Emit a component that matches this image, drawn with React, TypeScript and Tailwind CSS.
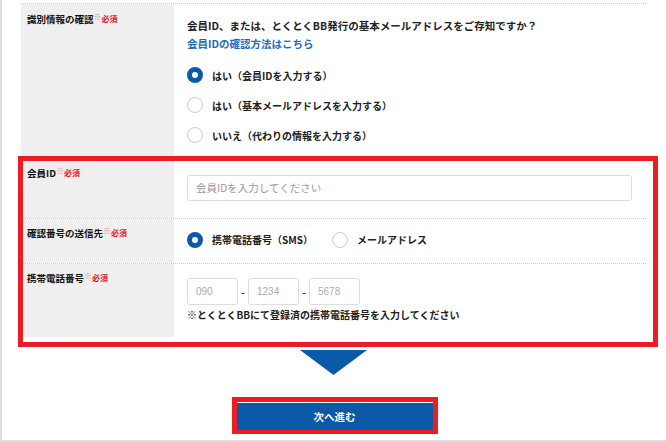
import React from 'react';

const FONT = { fontFamily: '"Noto Sans CJK JP", "Noto Sans", sans-serif' };

function Required() {
  return (
    <span className="flex items-start">
      <span className="text-[8px] leading-[8px] text-[#f27f84]">※</span>
      <span className="text-[8px] leading-[12px] font-bold text-[#e8131b]">必須</span>
    </span>
  );
}

function Radio({ checked, label }: { checked?: boolean; label: string }) {
  return (
    <label className="flex items-center gap-[9px]">
      <span
        className={
          checked
            ? 'w-4 h-4 rounded-full border-[5px] border-[#0a5aa8] bg-white'
            : 'w-4 h-4 rounded-full border border-[#cccccc] bg-white'
        }
      />
      <span className="text-[10px] font-bold text-[#222]">{label}</span>
    </label>
  );
}

function Label({ text, pt }: { text: string; pt: string }) {
  return (
    <div className={`w-[153px] shrink-0 bg-[#efefef] pl-[6px] ${pt}`}>
      <div className="flex items-start">
        <span className="text-[9.5px] leading-[12px] font-bold text-[#111]">{text}</span>
        <Required />
      </div>
    </div>
  );
}

export default function App() {
  return (
    <div
      style={FONT}
      className="w-[666px] h-[442px] bg-white border-l-2 border-b-2 border-[#dddddd] flex flex-col pl-[19px] pr-[20px]"
    >
      <div className="mt-[3px] border-t border-dotted border-[#cccccc]">
        {/* 識別情報 */}
        <div className="flex border-b border-dotted border-[#cccccc]">
          <Label text="識別情報の確認" pt="pt-[9px]" />
          <div className="flex-1 pl-[13px] pt-[14px] pb-[7px]">
            <p className="text-[10.5px] leading-[16px] font-bold text-[#222]">
              会員ID、または、とくとくBB発行の基本メールアドレスをご存知ですか？
            </p>
            <a className="block mt-[2px] text-[10.5px] leading-[16px] font-bold text-[#1a6dbb]">
              会員IDの確認方法はこちら
            </a>
            <div className="mt-[8px] flex flex-col">
              <div className="h-[30px] flex items-center">
                <Radio checked label="はい（会員IDを入力する）" />
              </div>
              <div className="h-[30px] flex items-center">
                <Radio label="はい（基本メールアドレスを入力する）" />
              </div>
              <div className="h-[30px] flex items-center">
                <Radio label="いいえ（代わりの情報を入力する）" />
              </div>
            </div>
          </div>
        </div>

        <div className="relative">
          {/* 会員ID */}
          <div className="flex border-b border-dotted border-[#cccccc]">
            <Label text="会員ID" pt="pt-[9px]" />
            <div className="flex-1 pl-[13px] pr-[14px] pt-[15px] pb-[17px]">
              <input
                placeholder="会員IDを入力してください"
                className="w-full h-[26px] rounded-[3px] border border-[#dddddd] px-[8px] text-[10.5px] placeholder:text-[#999]"
                style={FONT}
              />
            </div>
          </div>

          {/* 送信先 */}
          <div className="flex border-b border-dotted border-[#cccccc]">
            <Label text="確認番号の送信先" pt="pt-[8px]" />
            <div className="flex-1 pl-[13px] pt-[6px] pb-[8px] h-[44px]">
              <div className="h-[30px] flex items-center gap-[19px]">
                <Radio checked label="携帯電話番号（SMS）" />
                <Radio label="メールアドレス" />
              </div>
            </div>
          </div>

          {/* 携帯電話番号 */}
          <div className="flex">
            <Label text="携帯電話番号" pt="pt-[8px]" />
            <div className="flex-1 pl-[13px] pt-[14px] pb-[14px]">
              <div className="flex items-center gap-[3px]">
                <input
                  placeholder="090"
                  className="w-[51px] h-[27px] rounded-[3px] border border-[#dddddd] px-[8px] text-[10px] placeholder:text-[#aaa]"
                  style={{ fontFamily: '"Liberation Sans", sans-serif' }}
                />
                <span className="w-[4px] text-[10px] font-bold text-[#333] text-center">-</span>
                <input
                  placeholder="1234"
                  className="w-[51px] h-[27px] rounded-[3px] border border-[#dddddd] px-[8px] text-[10px] placeholder:text-[#aaa]"
                  style={{ fontFamily: '"Liberation Sans", sans-serif' }}
                />
                <span className="w-[4px] text-[10px] font-bold text-[#333] text-center">-</span>
                <input
                  placeholder="5678"
                  className="w-[51px] h-[27px] rounded-[3px] border border-[#dddddd] px-[8px] text-[10px] placeholder:text-[#aaa]"
                  style={{ fontFamily: '"Liberation Sans", sans-serif' }}
                />
              </div>
              <p className="mt-[2px] text-[10px] leading-[16px] font-bold text-[#222]">
                ※とくとくBBにて登録済の携帯電話番号を入力してください
              </p>
            </div>
          </div>

          {/* annotation frame */}
          <div className="pointer-events-none absolute -left-[3px] -top-[2px] -right-[12px] -bottom-[10px] border-[5px] border-[#ec1c24]" />
        </div>
      </div>

      {/* arrow */}
      <div className="mt-[13px] flex justify-center">
        <svg width="67" height="25" viewBox="0 0 67 25">
          <polygon points="0,0 67,0 33.5,25" fill="#0a5aa8" />
        </svg>
      </div>

      {/* submit */}
      <div className="mt-[22px] flex justify-center pl-[2px]">
        <div className="w-[206px] h-[37px] border-[5px] border-[#ec1c24]">
          <button className="w-full h-full bg-[#0a5aa8] text-white text-[10.5px] font-bold" style={FONT}>
            次へ進む
          </button>
        </div>
      </div>
    </div>
  );
}
